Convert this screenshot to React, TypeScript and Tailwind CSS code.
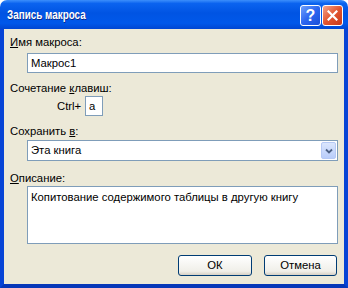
export default function App() {
  return (
    <div className="h-[288px] w-[348px] bg-white font-['Liberation_Sans',Arial,sans-serif] text-[11.3px] leading-[13px] text-black">
      <div className="flex h-full flex-col">
        {/* title bar */}
        <div className="flex h-[29px] shrink-0 items-center rounded-t-[7px] bg-[linear-gradient(to_bottom,#3c8ffb_0%,#0b63ef_12%,#0054e3_45%,#0058ea_80%,#0046d2_100%)] pl-[7px] pr-[5px]">
          <span className="mt-[1px] origin-left scale-x-[0.79] whitespace-nowrap text-[12.5px] font-bold text-white [text-shadow:1px_1px_0_#0b2b8a]">
            Запись макроса
          </span>
          <div className="ml-auto mt-[1px] flex gap-[1px]">
            <div className="flex h-[21px] w-[21px] items-center justify-center rounded-[3px] border border-white bg-[linear-gradient(135deg,#6fa0fb_0%,#2c66f0_50%,#1a4fd8_100%)] text-[16px] font-bold text-white">
              ?
            </div>
            <div className="flex h-[21px] w-[21px] items-center justify-center rounded-[3px] border border-white bg-[linear-gradient(135deg,#f3a58d_0%,#e2552f_50%,#c8391b_100%)]">
              <svg width="11" height="11" viewBox="0 0 11 11">
                <path d="M1.5 1.5 L9.5 9.5 M9.5 1.5 L1.5 9.5" stroke="white" strokeWidth="2.2" strokeLinecap="square" />
              </svg>
            </div>
          </div>
        </div>

        {/* body */}
        <div className="flex flex-1 flex-col border-x-4 border-b-4 border-x-[#0744d6] border-b-[#0637b8] bg-[#ece9d8] px-[6px]">
          <div className="mt-[7px]">
            <span className="underline">И</span>мя макроса:
          </div>
          <div className="ml-[17px] mt-[4px] flex h-[20px] items-center border border-[#7f9db9] bg-white pl-[3px]">
            Макрос1
          </div>

          <div className="mt-[9px]">
            Сочетание <span className="underline">к</span>лавиш:
          </div>
          <div className="ml-[47px] mt-[1px] flex items-center">
            <span className="w-[28px]">Ctrl+</span>
            <div className="flex h-[20px] w-[18px] items-center border border-[#7f9db9] bg-white pl-[3px]">
              a
            </div>
          </div>

          <div className="mt-[9px]">
            Сохранить <span className="underline">в</span>:
          </div>
          <div className="ml-[17px] mt-[2px] flex h-[21px] items-center border border-[#7f9db9] bg-white pl-[3px]">
            <span className="flex-1">Эта книга</span>
            <div className="mr-[1px] flex h-[17px] w-[15px] items-center justify-center rounded-[2px] border border-[#b6c9f5] bg-[linear-gradient(to_bottom,#dbe6fd,#b9cdfa)]">
              <svg width="8" height="6" viewBox="0 0 8 6">
                <path d="M1 1.5 L4 4.5 L7 1.5" fill="none" stroke="#4d6185" strokeWidth="1.8" />
              </svg>
            </div>
          </div>

          <div className="mt-[11px]">
            <span className="underline">О</span>писание:
          </div>
          <div className="ml-[17px] mt-[1px] h-[58px] border border-[#7f9db9] bg-white pl-[3px] pt-[4px]">
            Копитование содержимого таблицы в другую книгу
          </div>

          <div className="mt-[11px] flex justify-end gap-[12px] pr-[1px]">
            <button className="flex h-[21px] w-[74px] items-center justify-center rounded-[3px] border border-[#003c74] bg-[linear-gradient(to_bottom,#ffffff,#f0efe9_80%,#d6d0c5)]">
              ОК
            </button>
            <button className="flex h-[21px] w-[73px] items-center justify-center rounded-[3px] border border-[#003c74] bg-[linear-gradient(to_bottom,#ffffff,#f0efe9_80%,#d6d0c5)]">
              Отмена
            </button>
          </div>
        </div>
      </div>
    </div>
  );
}
